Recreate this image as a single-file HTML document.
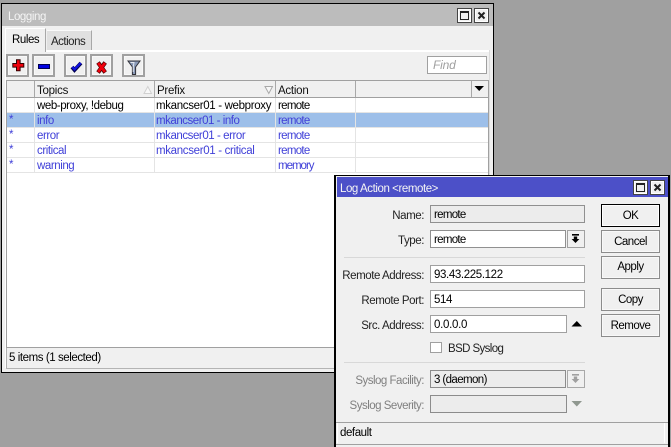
<!DOCTYPE html>
<html><head><meta charset="utf-8"><style>
html,body{margin:0;padding:0}
body{width:671px;height:445px;overflow:hidden;background:#a0a0a0;position:relative;font-family:"Liberation Sans",sans-serif;font-size:11.5px;letter-spacing:-0.43px;color:#000}
div,svg{position:absolute;box-sizing:border-box}
.t{white-space:nowrap;line-height:14px;height:14px}
.b{color:#4040d8}
.r{text-align:right}
.btn{background:#f0f0f0;border:2px solid #a0a0a0;box-shadow:inset 0 0 0 1px #f8f8f8}
.tb{background:#f0f0f0;border:1px solid #444;box-shadow:inset 0 0 0 1px #fff}
.in{background:#fff;border:1px solid #a0a0a0;height:18px;padding:2px 2px 0 3px;line-height:14px;white-space:nowrap}
.dis{background:#ececec;border:1px solid #8c8c8c}
.cap{text-align:center;font-size:11.5px;letter-spacing:-0.5px}
</style></head><body>

<!-- Logging window -->
<div style="left:1px;top:3px;width:493px;height:370px;background:#f0f0f0;border:1px solid #000"></div>
<div style="left:2px;top:4px;width:491px;height:22px;background:#bcbcbc"></div>
<div class="t" style="left:8px;top:10px;color:#f4f4f4">Logging</div>
<div class="tb" style="left:457px;top:8px;width:15px;height:15px"></div>
<div style="left:460px;top:11px;width:9px;height:9px;border:1px solid #222;border-top-width:2px"></div>
<div class="tb" style="left:474px;top:8px;width:15px;height:15px"></div>
<svg style="left:474px;top:8px" width="15" height="15"><path d="M4.5 4.5L10.5 10.5M10.5 4.5L4.5 10.5" stroke="#222" stroke-width="2"/></svg>

<!-- tabs -->
<div style="left:5px;top:50px;width:485px;height:2px;background:#fff"></div>
<div style="left:489px;top:50px;width:1px;height:318px;background:#dcdcdc"></div>
<div style="left:5px;top:50px;width:1px;height:318px;background:#fff"></div>
<div style="left:5px;top:28px;width:41px;height:24px;background:#f0f0f0;border-top:1px solid #fff;border-right:1px solid #a8a8a8;border-left:1px solid #fff"></div>
<div class="t" style="left:12px;top:33px">Rules</div>
<div style="left:47px;top:30px;width:45px;height:20px;background:#e0e0e0;border-top:1px solid #fafafa;border-right:1px solid #a8a8a8"></div>
<div class="t" style="left:51px;top:35px;color:#222;letter-spacing:-0.5px">Actions</div>

<!-- toolbar -->
<div class="btn" style="left:6px;top:54px;width:23px;height:23px"></div>
<svg style="left:6px;top:54px" width="23" height="23"><path d="M12.3 5.3V17.3M6.3 11.3H18.3" stroke="#300" stroke-width="4.6"/><path d="M12.3 6.3V16.3M7.3 11.3H17.3" stroke="#f0000c" stroke-width="2.6"/></svg>
<div class="btn" style="left:32px;top:54px;width:23px;height:23px"></div>
<div style="left:38px;top:64px;width:12px;height:5px;background:#0000e0;border:1px solid #000050"></div>
<div class="btn" style="left:64px;top:54px;width:23px;height:23px"></div>
<svg style="left:64px;top:54px" width="23" height="23"><path d="M8 13L10.5 16L17 9" fill="none" stroke="#000050" stroke-width="3.8"/><path d="M8.3 13L10.5 15.4L16.7 9" fill="none" stroke="#1010e0" stroke-width="2.2"/></svg>
<div class="btn" style="left:90px;top:54px;width:23px;height:23px"></div>
<svg style="left:90px;top:54px" width="23" height="23"><path d="M8 8.5L15.2 18.5M15.2 8.5L8 18.5" fill="none" stroke="#400" stroke-width="4.2"/><path d="M8.2 9L15 18M15 9L8.2 18" fill="none" stroke="#f0000c" stroke-width="2.8"/></svg>
<div class="btn" style="left:122px;top:54px;width:23px;height:23px"></div>
<svg style="left:122px;top:54px" width="23" height="23"><path d="M6 7H18L13.6 13V20.5H10.4V13Z" fill="#8a9ab8" stroke="#303038" stroke-width="1"/><path d="M8.5 8.5H12L11.2 13V18" fill="none" stroke="#e4e8f0" stroke-width="1"/></svg>
<div style="left:427px;top:56px;width:60px;height:18px;background:#fff;border:1px solid #a0a0a0"></div>
<div class="t" style="left:433px;top:58px;color:#a0a0a0;font-style:italic;font-size:12px;letter-spacing:-0.2px">Find</div>

<!-- table -->
<div style="left:6px;top:80px;width:483px;height:268px;background:#fff;border:1px solid #a0a0a0"></div>
<div style="left:7px;top:81px;width:481px;height:16px;background:#f0f0f0"></div>
<div style="left:7px;top:97px;width:481px;height:1px;background:#a0a0a0"></div>
<div style="left:34px;top:81px;width:1px;height:16px;background:#a8a8a8"></div>
<div style="left:154px;top:81px;width:1px;height:16px;background:#a8a8a8"></div>
<div style="left:275px;top:81px;width:1px;height:16px;background:#a8a8a8"></div>
<div style="left:355px;top:81px;width:1px;height:16px;background:#a8a8a8"></div>
<div style="left:471px;top:81px;width:1px;height:16px;background:#a8a8a8"></div>
<div class="t" style="left:37px;top:84px;color:#111;letter-spacing:-0.25px">Topics</div>
<div class="t" style="left:157px;top:84px;color:#111;letter-spacing:-0.25px">Prefix</div>
<div class="t" style="left:278px;top:84px;color:#111;letter-spacing:-0.25px">Action</div>
<svg style="left:143px;top:85px" width="10" height="10"><path d="M1 8.5H8.5L4.8 1.5Z" fill="#f8f8f8" stroke="#d0d0d0"/></svg>
<svg style="left:264px;top:85px" width="10" height="10"><path d="M1 1.5H8.5L4.8 8.5Z" fill="#f8f8f8" stroke="#a8a8a8"/></svg>
<svg style="left:474px;top:85px" width="11" height="8"><path d="M0.5 1H10L5.2 6Z" fill="#000"/></svg>

<div style="left:7px;top:113px;width:481px;height:14px;background:#9dbfe9"></div>
<div style="left:7px;top:112px;width:481px;height:1px;background:#e4e4e4"></div>
<div style="left:7px;top:127px;width:481px;height:1px;background:#e4e4e4"></div>
<div style="left:7px;top:142px;width:481px;height:1px;background:#e4e4e4"></div>
<div style="left:7px;top:157px;width:481px;height:1px;background:#e4e4e4"></div>
<div style="left:7px;top:172px;width:481px;height:1px;background:#e4e4e4"></div>
<div style="left:34px;top:98px;width:1px;height:75px;background:#e4e4e4"></div>
<div style="left:154px;top:98px;width:1px;height:75px;background:#e4e4e4"></div>
<div style="left:275px;top:98px;width:1px;height:75px;background:#e4e4e4"></div>
<div style="left:355px;top:98px;width:1px;height:75px;background:#e4e4e4"></div>

<div class="t" style="left:37px;top:99px">web-proxy, !debug</div>
<div class="t" style="left:156px;top:99px;letter-spacing:-0.33px">mkancser01 - webproxy</div>
<div class="t" style="left:278px;top:99px;letter-spacing:-0.7px">remote</div>

<div class="t b" style="left:9px;top:113px">*</div>
<div class="t b" style="left:37px;top:114px">info</div>
<div class="t b" style="left:156px;top:114px;letter-spacing:-0.47px">mkancser01 - info</div>
<div class="t b" style="left:278px;top:114px;letter-spacing:-0.7px">remote</div>

<div class="t b" style="left:9px;top:128px">*</div>
<div class="t b" style="left:37px;top:129px">error</div>
<div class="t b" style="left:156px;top:129px;letter-spacing:-0.44px">mkancser01 - error</div>
<div class="t b" style="left:278px;top:129px;letter-spacing:-0.7px">remote</div>

<div class="t b" style="left:9px;top:143px">*</div>
<div class="t b" style="left:37px;top:144px">critical</div>
<div class="t b" style="left:156px;top:144px;letter-spacing:-0.33px">mkancser01 - critical</div>
<div class="t b" style="left:278px;top:144px;letter-spacing:-0.7px">remote</div>

<div class="t b" style="left:9px;top:158px">*</div>
<div class="t b" style="left:37px;top:159px">warning</div>
<div class="t b" style="left:278px;top:159px;letter-spacing:-1px">memory</div>

<div class="t" style="left:9px;top:351px">5 items (1 selected)</div>
<div style="left:6px;top:348px;width:1px;height:21px;background:#b0b0b0"></div>
<div style="left:6px;top:368px;width:484px;height:1px;background:#b4b4b4"></div>

<!-- Dialog -->
<div style="left:334px;top:175px;width:336px;height:272px;background:#f0f0f0;border:1px solid #000;border-left-width:2px;border-right-width:2px;border-bottom:0"></div>
<div style="left:337px;top:177px;width:331px;height:20px;background:#4c50c8"></div>
<div class="t" style="left:340px;top:182px;color:#f4f4f4">Log Action &lt;remote&gt;</div>
<div class="tb" style="left:633px;top:180px;width:15px;height:15px"></div>
<div style="left:636px;top:183px;width:9px;height:9px;border:1px solid #222;border-top-width:2px"></div>
<div class="tb" style="left:650px;top:180px;width:15px;height:15px"></div>
<svg style="left:650px;top:180px" width="15" height="15"><path d="M4.5 4.5L10.5 10.5M10.5 4.5L4.5 10.5" stroke="#222" stroke-width="2"/></svg>

<!-- labels -->
<div class="t r" style="left:336px;top:209px;width:88px;color:#222">Name:</div>
<div class="t r" style="left:336px;top:234px;width:88px;color:#222">Type:</div>
<div class="t r" style="left:336px;top:269px;width:88px;color:#222">Remote Address:</div>
<div class="t r" style="left:336px;top:294px;width:88px;color:#222">Remote Port:</div>
<div class="t r" style="left:336px;top:319px;width:88px;color:#222">Src. Address:</div>
<div class="t r" style="left:336px;top:374px;width:88px;color:#808080;letter-spacing:-0.5px">Syslog Facility:</div>
<div class="t r" style="left:336px;top:399px;width:88px;color:#808080;letter-spacing:-0.5px">Syslog Severity:</div>

<!-- fields -->
<div class="in" style="left:430px;top:205px;width:155px;background:#ececec;border-color:#909090;letter-spacing:-0.7px">remote</div>
<div class="in" style="left:430px;top:230px;width:136px;border-color:#909090;letter-spacing:-0.7px">remote</div>
<div style="left:567px;top:230px;width:18px;height:18px;background:#f0f0f0;border:1px solid #a0a0a0"></div>
<svg style="left:567px;top:230px" width="18" height="18"><rect x="5" y="4" width="7" height="1.6" fill="#000"/><path d="M6.8 6.5H10.2V9H12.4L8.5 13L4.6 9H6.8Z" fill="#000"/></svg>
<div style="left:344px;top:257px;width:241px;height:1px;background:#d8d8d8"></div>
<div class="in" style="left:430px;top:265px;width:155px;letter-spacing:-0.37px">93.43.225.122</div>
<div class="in" style="left:430px;top:290px;width:155px;letter-spacing:-0.37px">514</div>
<div class="in" style="left:430px;top:315px;width:137px;letter-spacing:-0.3px">0.0.0.0</div>
<svg style="left:571px;top:320px" width="12" height="8"><path d="M0.5 6.5H11L5.8 1Z" fill="#000"/></svg>
<div style="left:430px;top:342px;width:12px;height:11px;background:#fff;border:1px solid #a0a0a0"></div>
<div class="t" style="left:448px;top:342px;color:#222;letter-spacing:-0.6px">BSD Syslog</div>
<div style="left:344px;top:362px;width:241px;height:1px;background:#d8d8d8"></div>
<div class="in dis" style="left:430px;top:370px;width:136px;letter-spacing:-0.6px">3 (daemon)</div>
<div style="left:567px;top:370px;width:18px;height:18px;background:#f0f0f0;border:1px solid #a8a8a8"></div>
<svg style="left:567px;top:370px" width="18" height="18"><rect x="5" y="4" width="7" height="1.6" fill="#a0a0a0"/><path d="M6.8 6.5H10.2V9H12.4L8.5 13L4.6 9H6.8Z" fill="#a0a0a0"/></svg>
<div class="in dis" style="left:430px;top:395px;width:137px"></div>
<svg style="left:571px;top:400px" width="12" height="8"><path d="M0.5 1H11L5.8 6.5Z" fill="#909890"/></svg>

<!-- buttons -->
<div class="cap" style="left:601px;top:204px;width:59px;height:23px;background:#f0f0f0;border:1px solid #000;box-shadow:inset 0 0 0 1px #fff;line-height:22px">OK</div>
<div class="cap btn" style="left:601px;top:230px;width:59px;height:23px;border-color:#8c8c8c;border-width:1px;line-height:22px">Cancel</div>
<div class="cap btn" style="left:601px;top:256px;width:59px;height:23px;border-color:#8c8c8c;border-width:1px;line-height:21px">Apply</div>
<div class="cap btn" style="left:601px;top:288px;width:59px;height:23px;border-color:#8c8c8c;border-width:1px;line-height:22px">Copy</div>
<div class="cap btn" style="left:601px;top:314px;width:59px;height:23px;border-color:#8c8c8c;border-width:1px;line-height:22px">Remove</div>

<!-- status -->
<div style="left:336px;top:422px;width:332px;height:1px;background:#a0a0a0"></div>
<div style="left:337px;top:423px;width:1px;height:20px;background:#fff"></div>
<div style="left:664px;top:423px;width:1px;height:20px;background:#fff"></div>
<div class="t" style="left:340px;top:426px">default</div>
<div style="left:336px;top:444px;width:332px;height:1px;background:#a0a0a0"></div>
</body></html>
